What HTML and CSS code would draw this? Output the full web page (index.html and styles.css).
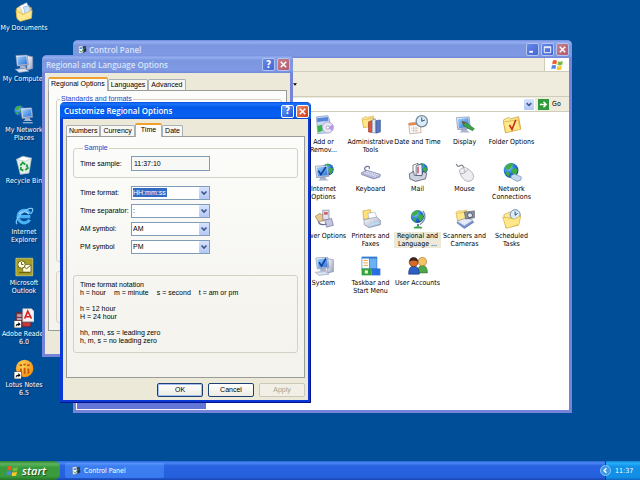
FILE: index.html
```
<!DOCTYPE html>
<html lang="en">

<head>
    <meta charset="UTF-8">
    <meta name="viewport" content="width=device-width, initial-scale=1.0">
    <title>Desktop</title>
    <link rel="stylesheet" href="styles.css">
</head>

<body>
    <!-- shared icon parts -->
    <svg class="defs" width="0" height="0" aria-hidden="true">
        <defs>
            <linearGradient id="gFolder" x1="0" y1="0" x2="1" y2="1">
                <stop offset="0" stop-color="#fff6b8"/>
                <stop offset="1" stop-color="#ecb93c"/>
            </linearGradient>
            <linearGradient id="gScreen" x1="0" y1="0" x2="1" y2="1">
                <stop offset="0" stop-color="#9bd4ff"/>
                <stop offset="1" stop-color="#2a6fd6"/>
            </linearGradient>
            <linearGradient id="gGrey" x1="0" y1="0" x2="1" y2="1">
                <stop offset="0" stop-color="#ffffff"/>
                <stop offset="1" stop-color="#9aa3bd"/>
            </linearGradient>
            <radialGradient id="gGlobe" cx="0.35" cy="0.3" r="0.8">
                <stop offset="0" stop-color="#8fd0ff"/>
                <stop offset="0.5" stop-color="#2478d8"/>
                <stop offset="1" stop-color="#0a3a94"/>
            </radialGradient>
            <radialGradient id="gLotus" cx="0.4" cy="0.35" r="0.7">
                <stop offset="0" stop-color="#ffd860"/>
                <stop offset="1" stop-color="#f08c10"/>
            </radialGradient>
        </defs>
        <symbol id="globe" viewBox="0 0 20 20">
            <circle cx="10" cy="10" r="9.5" fill="url(#gGlobe)"/>
            <path d="M3 5Q7 0 12 1Q13 4 10 5Q10 8 6 9Q3 9 2 7ZM11 9Q15 6 18 8Q19 13 15 17Q12 17 12 13Q10 12 11 9ZM4 12Q8 12 8 15L7 18Q4 16 3 13Z" fill="#3fae3c"/>
        </symbol>
        <symbol id="monitor" viewBox="0 0 24 24">
            <path d="M8 17L17 18L18 21L22 23L6 23L9 21Z" fill="#a9b4d0"/>
            <path d="M2 2L20 1L22 17L4 19Z" fill="url(#gGrey)" stroke="#7d8cb5"/>
            <path d="M4 4L18.500 3L20 15L6 17Z" fill="url(#gScreen)"/>
        </symbol>
        <symbol id="folder" viewBox="0 0 30 28">
            <path d="M2 7L10 3L13 5L25 2L28 20L5 26Z" fill="url(#gFolder)" stroke="#c99a2a"/>
            <path d="M2 10L24 7L28 21L6 26Z" fill="#ffe88a" stroke="#d6a838"/>
        </symbol>
        <symbol id="flag" viewBox="0 0 22 20">
            <path d="M3 3Q6 0 10 3L9 9Q5 7 2 9Z" fill="#ee5a28"/>
            <path d="M12 3.500Q16 6 20 3L19 9Q15 12 11 9.500Z" fill="#77bb3c"/>
            <path d="M1.500 11Q5 9 8.500 11L7.500 17Q4 15 0.500 17Z" fill="#4e86e8"/>
            <path d="M10.500 11.500Q14 14 18.500 11L17.500 17Q13 20 9.500 17.500Z" fill="#fcc72c"/>
        </symbol>
        <symbol id="cpl" viewBox="0 0 16 16">
            <path d="M7 3L14 1L15 10L9 13Z" fill="#2a2f50"/>
            <path d="M2 2L9 1L10 12L3 14Z" fill="#f5f8ff" stroke="#7080a8"/>
            <path d="M4 4L8 3.500V6L4 6.500Z" fill="#3b77d8"/>
            <path d="M4 9L7 11L13 4" fill="none" stroke="#2e9a4a" stroke-width="1.500"/>
        </symbol>
        <symbol id="shortcut" viewBox="0 0 12 12">
            <path d="M0 0H12V12H0Z" fill="#fff" stroke="#000"/>
            <path d="M3 10Q2 5 7 5V2.500L10.500 6L7 9V7Q4 7 3 10Z" fill="#000"/>
        </symbol>
        <symbol id="close" viewBox="0 0 12 12">
            <path d="M3 3L9 9M9 3L3 9" stroke="#fff" stroke-width="1.600"/>
        </symbol>
        <symbol id="chevron" viewBox="0 0 10 12">
            <path d="M2.500 4.500L5 7L7.500 4.500" fill="none" stroke="#3d5588" stroke-width="1.600"/>
        </symbol>
    </svg>

    <main class="desktop">
        <nav class="shortcuts" aria-label="Desktop icons">
            <a class="shortcut" href="#">
                <svg viewBox="0 0 32 32">
                    <path d="M4 10L12 5L28 9L27 26L10 30L4 24Z" fill="url(#gFolder)" stroke="#c99a2a"/>
                    <path d="M9 7L20 1L27 14L16 21Z" fill="#fff" stroke="#b8c4dc"/>
                    <path d="M15 8L24 6L27 17L18 20Z" fill="#cfe4fb" stroke="#7ea6dc"/>
                    <path d="M3 13L14 20L29 13L28 26L10 31L5 27Z" fill="#ffe98f" stroke="#d6a838"/>
                </svg>
                <span>My Documents</span>
            </a>
            <a class="shortcut" href="#">
                <svg viewBox="0 0 32 32">
                    <path d="M20 4L30 6L30 25L21 27Z" fill="url(#gGrey)" stroke="#7d8cb5"/>
                    <use href="#monitor" x="1" y="2" width="24" height="24"/>
                    <path d="M2 26L18 25L24 29L8 31Z" fill="#dfe5f2" stroke="#8b99bb"/>
                </svg>
                <span>My Computer</span>
            </a>
            <a class="shortcut" href="#">
                <svg viewBox="0 0 32 32">
                    <use href="#globe" x="0" y="2" width="18" height="18"/>
                    <use href="#monitor" x="9" y="5" width="23" height="23"/>
                    <path d="M14 30H30" stroke="#9fb6dc" stroke-width="2"/>
                </svg>
                <span>My Network Places</span>
            </a>
            <a class="shortcut" href="#">
                <svg viewBox="0 0 32 32">
                    <path d="M4 7L28 5L24 29L10 31Z" fill="#e3efea" stroke="#a5b9bd"/>
                    <path d="M4 7L14 2L28 5L18 10Z" fill="#fff" stroke="#b6c6ca"/>
                    <path d="M10 17L14 12L18 15M20 15L22 21L18 24M15 25L11 23L11 19" fill="none" stroke="#24a03a" stroke-width="3"/>
                </svg>
                <span>Recycle Bin</span>
            </a>
            <a class="shortcut" href="#">
                <svg viewBox="0 0 32 32">
                    <path d="M25 12A10 10 0 1 0 25 22M7 17H26" fill="none" stroke="#4db2f5" stroke-width="5"/>
                    <path d="M24 13A10 10 0 0 0 8 13" fill="none" stroke="#a4dcff" stroke-width="2"/>
                    <path d="M5 29Q0 25 11 13Q23 2 29 4Q32 7 26 13" fill="none" stroke="#7cc8fa" stroke-width="2"/>
                </svg>
                <span>Internet Explorer</span>
            </a>
            <a class="shortcut" href="#">
                <svg viewBox="0 0 32 32">
                    <path d="M3 2H30V30H3Z" fill="#a8a024" stroke="#e3df8e"/>
                    <path d="M14 12H27V24H14Z" fill="#fffce0" stroke="#5f5a10"/>
                    <path d="M14 13L20 19L27 13M8 25H26" fill="none" stroke="#5f5a10" stroke-width="1.500"/>
                    <circle cx="12" cy="12" r="6" fill="#fffce0" stroke="#5f5a10" stroke-width="1.500"/>
                    <path d="M12 8V12H15" fill="none" stroke="#5f5a10" stroke-width="1.500"/>
                </svg>
                <span>Microsoft Outlook</span>
            </a>
            <a class="shortcut" href="#">
                <svg viewBox="0 0 32 32">
                    <path d="M3 7H27V30H3Z" fill="#7c3a48" stroke="#4d2434"/>
                    <path d="M5 10H12V14H5ZM5 16H12V19H5Z" fill="#b8a8b4"/>
                    <path d="M14 1H28L32 5V22H14Z" fill="#f6f3f3" stroke="#b9a9a9"/>
                    <path d="M17 17L22 5L28 17M19 14H26" fill="none" stroke="#dd2020" stroke-width="2.500"/>
                    <path d="M15 24H26V29H15Z" fill="#d03438"/>
                    <use href="#shortcut" x="0" y="20" width="12" height="12"/>
                </svg>
                <span>Adobe Reader 6.0</span>
            </a>
            <a class="shortcut" href="#">
                <svg viewBox="0 0 32 32">
                    <circle cx="17" cy="15" r="14" fill="url(#gLotus)"/>
                    <path d="M11 15V23M17 14V24M23 15V23" stroke="#c65a08" stroke-width="3"/>
                    <path d="M9 10H13M15 9H19M21 10H25" stroke="#c65a08" stroke-width="3"/>
                    <use href="#shortcut" x="0" y="20" width="12" height="12"/>
                </svg>
                <span>Lotus Notes 6.5</span>
            </a>
        </nav>

        <section class="window control-panel inactive">
            <header class="titlebar">
                <svg class="title-icon"><use href="#cpl"/></svg>
                <h1>Control Panel</h1>
                <button class="cap" aria-label="Minimize"><svg viewBox="0 0 12 12"><path d="M2.500 8.500H6.500" stroke="#fff" stroke-width="2"/></svg></button>
                <button class="cap" aria-label="Maximize"><svg viewBox="0 0 12 12"><path d="M2.500 3H9.500V9.500H2.500ZM2.500 4H9.500" fill="none" stroke="#fff"/></svg></button>
                <button class="cap cap-close" aria-label="Close"><svg><use href="#close"/></svg></button>
            </header>
            <div class="menubar">
                <div class="throbber"><svg><use href="#flag"/></svg></div>
            </div>
            <div class="toolbar">
                <button aria-label="Views"><svg viewBox="0 0 5 3"><path d="M0 0H5L2.500 3Z" fill="#000"/></svg></button>
            </div>
            <div class="address">
                <div class="address-box"><svg><use href="#chevron"/></svg></div>
                <button class="go">
                    <svg viewBox="0 0 12 12">
                        <path d="M0 0H12V12H0Z" fill="#2f9a3c"/>
                        <path d="M2 6H9M6 3L9 6L6 9" fill="none" stroke="#fff" stroke-width="1.500"/>
                    </svg>
                    Go
                </button>
            </div>
            <div class="cp-body">
                <aside class="side-pane"></aside>
                <div class="items">
                    <a class="item" href="#">
                        <svg viewBox="0 0 32 32">
                            <path d="M4 3L22 1L25 8L24 28L6 30Z" fill="#c9dcf6" stroke="#6f8cc4"/>
                            <path d="M5 5L22 3L23 9L5 11Z" fill="#5b86d8"/>
                            <circle cx="22" cy="20" r="9" fill="#e7e3f4" stroke="#8f8bb5"/>
                            <path d="M22 20L30 15A9 9 0 0 1 29 25Z" fill="#b79be0"/>
                            <circle cx="22" cy="20" r="2.500" fill="#fff" stroke="#8f8bb5"/>
                            <path d="M5 18L12 15L14 25L7 28Z" fill="#37b34a"/>
                        </svg>
                        <span>Add or Remov...</span>
                    </a>
                    <a class="item" href="#">
                        <svg viewBox="0 0 32 32">
                            <use href="#folder" x="0" y="0" width="24" height="22"/>
                            <path d="M12 11L17 9V28L12 27Z" fill="#e0563a" stroke="#913020"/>
                            <path d="M18 8L23 6V29L18 28Z" fill="#e8ecf6" stroke="#6c7ba5"/>
                            <path d="M24 9L31 8V27L24 29Z" fill="#5878c0" stroke="#34508c"/>
                        </svg>
                        <span>Administrative Tools</span>
                    </a>
                    <a class="item one-line" href="#">
                        <svg viewBox="0 0 32 32">
                            <path d="M1 13L19 11L21 28L3 30Z" fill="#fff" stroke="#b88a6a"/>
                            <path d="M1 13L19 11V15L2 17Z" fill="#e88a4c"/>
                            <path d="M5 21H17M5 25H17M9 18V28M13 18V28" stroke="#c9b6a8"/>
                            <circle cx="22" cy="10" r="9" fill="#d9ecf8" stroke="#75899c" stroke-width="2"/>
                            <path d="M22 4V10L27 8" fill="none" stroke="#2c4468" stroke-width="1.500"/>
                        </svg>
                        <span>Date and Time</span>
                    </a>
                    <a class="item" href="#">
                        <svg viewBox="0 0 32 32">
                            <use href="#monitor" x="0" y="1" width="27" height="29"/>
                            <path d="M12 12L17 12L31 22L28 25L14 17Z" fill="#3aa644" stroke="#1c6e2c"/>
                            <path d="M10 9L17 11L14 16Z" fill="#7a5230"/>
                        </svg>
                        <span>Display</span>
                    </a>
                    <a class="item one-line" href="#">
                        <svg viewBox="0 0 32 32">
                            <use href="#folder" x="0" y="0" width="32" height="31"/>
                            <path d="M12 16L16 23L22 8" fill="none" stroke="#c22c1c" stroke-width="2.500"/>
                        </svg>
                        <span>Folder Options</span>
                    </a>
                    <a class="item" href="#">
                        <svg viewBox="0 0 32 32">
                            <use href="#globe" x="12" y="2" width="20" height="20"/>
                            <use href="#monitor" x="0" y="4" width="26" height="27"/>
                            <path d="M7 14L11 20L19 8" fill="none" stroke="#0f3f9c" stroke-width="2.500"/>
                        </svg>
                        <span>Internet Options</span>
                    </a>
                    <a class="item" href="#">
                        <svg viewBox="0 0 32 32">
                            <path d="M8 14Q3 10 9 7Q15 6 13 11" fill="none" stroke="#74789a" stroke-width="2"/>
                            <path d="M1 17L9 13L31 20L30 24L20 27L1 20Z" fill="#b4b9da" stroke="#666a90"/>
                            <path d="M5 17L24 23M9 15L28 21" stroke="#f6f7ff" stroke-width="1.500" stroke-dasharray="2 1"/>
                        </svg>
                        <span>Keyboard</span>
                    </a>
                    <a class="item" href="#">
                        <svg viewBox="0 0 32 32">
                            <use href="#globe" x="13" y="1" width="19" height="20"/>
                            <path d="M8 5L16 2L17 22H8Z" fill="#fff" stroke="#30344c"/>
                            <path d="M13 6L22 3L23 22H13Z" fill="#eef3ff" stroke="#30344c"/>
                            <path d="M15 8L17 7V18H15Z" fill="#c83038"/>
                            <path d="M2 19L9 15L10 21L22 22L24 15L30 18L28 27L12 31L3 27Z" fill="#cdd3e2" stroke="#30344c"/>
                        </svg>
                        <span>Mail</span>
                    </a>
                    <a class="item" href="#">
                        <svg viewBox="0 0 32 32">
                            <path d="M14 10Q13 3 8 6Q4 9 2 3" fill="none" stroke="#84868f" stroke-width="2"/>
                            <path d="M7 14Q10 8 17 9Q28 14 30 23Q29 31 20 31Q10 28 7 14Z" fill="#eeeef2" stroke="#8b8d99"/>
                            <path d="M9 19Q15 20 21 12M14 10L16 17" fill="none" stroke="#8b8d99"/>
                        </svg>
                        <span>Mouse</span>
                    </a>
                    <a class="item" href="#">
                        <svg viewBox="0 0 32 32">
                            <use href="#globe" x="2" y="1" width="25" height="25"/>
                            <path d="M14 22L20 19L31 24L30 29L24 31L15 26Z" fill="#c4d8ee" stroke="#6684b0"/>
                        </svg>
                        <span>Network Connections</span>
                    </a>
                    <a class="item one-line" href="#">
                        <svg viewBox="0 0 32 32">
                            <path d="M2 12L9 7L17 11L15 19L7 20Z" fill="#e9c98c" stroke="#8a6c42"/>
                            <path d="M14 2L24 2V17H14Z" fill="#e4e0ee" stroke="#78718e"/>
                            <path d="M16 5H22V9H16Z" fill="#c86060"/>
                            <path d="M17 18L28 15L31 26L20 29Z" fill="#c3c6de" stroke="#666a92"/>
                            <path d="M7 20Q9 27 20 24" fill="none" stroke="#666a92" stroke-width="2"/>
                        </svg>
                        <span>Power Options</span>
                    </a>
                    <a class="item" href="#">
                        <svg viewBox="0 0 32 32">
                            <path d="M3 3L15 1L18 14L4 17Z" fill="#ffe07a" stroke="#c99a2a"/>
                            <path d="M11 7L22 5L26 15L13 17Z" fill="#fff" stroke="#9fabc3"/>
                            <path d="M5 17L25 13L31 18V25L13 30L5 25Z" fill="url(#gGrey)" stroke="#7a86a3"/>
                            <path d="M14 24L28 20L30 23L15 27Z" fill="#b5dcf8"/>
                        </svg>
                        <span>Printers and Faxes</span>
                    </a>
                    <a class="item selected" href="#">
                        <svg viewBox="0 0 32 32">
                            <path d="M24 3Q32 15 19 25" fill="none" stroke="#7689a6" stroke-width="2"/>
                            <use href="#globe" x="4" y="1" width="22" height="22"/>
                            <path d="M16 24V28" stroke="#55709b" stroke-width="3"/>
                            <path d="M9 29Q16 26 23 29L22 31H10Z" fill="#39a64a"/>
                        </svg>
                        <span>Regional and Language ...</span>
                    </a>
                    <a class="item" href="#">
                        <svg viewBox="0 0 32 32">
                            <use href="#folder" x="0" y="0" width="22" height="20"/>
                            <path d="M3 22L18 16L30 21L15 31Z" fill="#7895d8" stroke="#4a62a4"/>
                            <path d="M3 20L18 14L29 18L15 27Z" fill="#e4ebf8" stroke="#8592b3"/>
                            <path d="M15 5L31 3V14L17 16Z" fill="#8c929f" stroke="#4d525e"/>
                            <circle cx="24" cy="10" r="4" fill="#dce8f4" stroke="#4d525e" stroke-width="1.500"/>
                        </svg>
                        <span>Scanners and Cameras</span>
                    </a>
                    <a class="item" href="#">
                        <svg viewBox="0 0 32 32">
                            <path d="M3 9L12 5L29 8L26 26L6 30Z" fill="url(#gFolder)" stroke="#c99a2a"/>
                            <circle cx="21" cy="9" r="8" fill="#d9ecf8" stroke="#6684a8" stroke-width="1.500"/>
                            <path d="M21 4V10L25 7" fill="none" stroke="#2c4468" stroke-width="1.500"/>
                            <path d="M1 13L20 16L30 11L27 25L7 31Z" fill="#ffe88a" stroke="#d6a838"/>
                        </svg>
                        <span>Scheduled Tasks</span>
                    </a>
                    <a class="item" href="#">
                        <svg viewBox="0 0 32 32">
                            <path d="M21 4L31 6V25L22 27Z" fill="url(#gGrey)" stroke="#7d8cb5"/>
                            <use href="#monitor" x="1" y="1" width="25" height="25"/>
                            <path d="M8 10L12 16L19 4" fill="none" stroke="#0f3f9c" stroke-width="2.500"/>
                            <path d="M2 26L18 25L24 29L8 31Z" fill="#dfe5f2" stroke="#8b99bb"/>
                        </svg>
                        <span>System</span>
                    </a>
                    <a class="item" href="#">
                        <svg viewBox="0 0 32 32">
                            <path d="M1 1H26V23H1Z" fill="#2c79d0"/>
                            <path d="M2 4H13V20H2Z" fill="#fff"/>
                            <path d="M14 4H25V20H14Z" fill="#6cb0f0"/>
                            <path d="M4 7H11M4 11H11M4 15H11" stroke="#f09a30" stroke-width="1.500"/>
                            <path d="M1 20H17V31H1Z" fill="#33a23c"/>
                            <path d="M17 20H31V31H17Z" fill="#2a6fe0"/>
                            <path d="M6 23H11V28H6Z" fill="#f3f7c8"/>
                        </svg>
                        <span>Taskbar and Start Menu</span>
                    </a>
                    <a class="item one-line" href="#">
                        <svg viewBox="0 0 32 32">
                            <path d="M16 27Q15 15 23 15Q31 15 31 27Z" fill="#4ea84a" stroke="#2c6c30"/>
                            <circle cx="23" cy="9" r="6.500" fill="#f6c268" stroke="#a87020"/>
                            <path d="M1 29Q1 16 9 16Q18 16 18 29Z" fill="#2d5fc4" stroke="#173878"/>
                            <circle cx="9" cy="10" r="7" fill="#d86a28" stroke="#5c2c18"/>
                            <path d="M2 9Q3 2 9 2Q15 2 16 9Q9 5 2 9Z" fill="#3a241c"/>
                        </svg>
                        <span>User Accounts</span>
                    </a>
                </div>
            </div>
        </section>

        <section class="window regional inactive">
            <header class="titlebar">
                <h2>Regional and Language Options</h2>
                <button class="cap" aria-label="Help">?</button>
                <button class="cap cap-close" aria-label="Close"><svg><use href="#close"/></svg></button>
            </header>
            <div class="dialog-body">
                <div class="tabs" role="tablist">
                    <button role="tab" class="tab active" aria-selected="true">Regional Options</button>
                    <button role="tab" class="tab">Languages</button>
                    <button role="tab" class="tab">Advanced</button>
                </div>
                <div class="tab-page">
                    <fieldset class="group formats">
                        <legend>Standards and formats</legend>
                    </fieldset>
                    <fieldset class="group location"></fieldset>
                </div>
            </div>
        </section>

        <section class="window customize">
            <header class="titlebar">
                <h2>Customize Regional Options</h2>
                <button class="cap" aria-label="Help">?</button>
                <button class="cap cap-close" aria-label="Close"><svg><use href="#close"/></svg></button>
            </header>
            <form class="dialog-body">
                <div class="tabs" role="tablist">
                    <button type="button" role="tab" class="tab">Numbers</button>
                    <button type="button" role="tab" class="tab">Currency</button>
                    <button type="button" role="tab" class="tab active" aria-selected="true">Time</button>
                    <button type="button" role="tab" class="tab">Date</button>
                </div>
                <div class="tab-page">
                    <fieldset class="group sample">
                        <legend>Sample</legend>
                        <div class="field">
                            <label for="sample">Time sample:</label>
                            <input type="text" id="sample" value="11:37:10" readonly>
                        </div>
                    </fieldset>
                    <div class="fields">
                        <div class="field">
                            <label for="format">Time format:</label>
                            <div class="combo highlighted">
                                <select id="format"><option>HH:mm:ss</option></select>
                                <svg><use href="#chevron"/></svg>
                            </div>
                        </div>
                        <div class="field">
                            <label for="separator">Time separator:</label>
                            <div class="combo">
                                <select id="separator"><option>:</option></select>
                                <svg><use href="#chevron"/></svg>
                            </div>
                        </div>
                        <div class="field">
                            <label for="am">AM symbol:</label>
                            <div class="combo">
                                <select id="am"><option>AM</option></select>
                                <svg><use href="#chevron"/></svg>
                            </div>
                        </div>
                        <div class="field">
                            <label for="pm">PM symbol</label>
                            <div class="combo">
                                <select id="pm"><option>PM</option></select>
                                <svg><use href="#chevron"/></svg>
                            </div>
                        </div>
                    </div>
                    <div class="notation">
                        <p>Time format notation</p>
                        <p class="units"><span>h = hour</span><span>m = minute</span><span>s = second</span><span>t = am or pm</span></p>
                        <p class="block">h = 12 hour<br>H = 24 hour</p>
                        <p class="block">hh, mm, ss = leading zero<br>h, m, s = no leading zero</p>
                    </div>
                </div>
                <div class="actions">
                    <button type="button" class="btn default">OK</button>
                    <button type="button" class="btn">Cancel</button>
                    <button type="button" class="btn" disabled>Apply</button>
                </div>
            </form>
        </section>
    </main>

    <footer class="taskbar">
        <button class="start"><svg><use href="#flag"/></svg>start</button>
        <button class="task"><svg><use href="#cpl"/></svg>Control Panel</button>
        <div class="tray">
            <button class="tray-toggle" aria-label="Show hidden icons">
                <svg viewBox="0 0 12 12">
                    <circle cx="6" cy="6" r="5.500" fill="#3c9ae8" stroke="#8cc8f8"/>
                    <path d="M7 3.500L4.500 6L7 8.500" fill="none" stroke="#fff" stroke-width="1.500"/>
                </svg>
            </button>
            <time>11:37</time>
        </div>
    </footer>
</body>

</html>
```
FILE: styles.css
```
* {
    box-sizing: border-box;
}

body {
    margin: 0;
    height: 100vh;
    display: flex;
    flex-direction: column;
    overflow: hidden;
    background-color: #004e98;
    font-family: "DejaVu Sans Condensed", "DejaVu Sans", sans-serif;
    font-size: 7px;
    line-height: 8px;
    color: #000;
}

h1, h2, p, fieldset, legend {
    margin: 0;
    padding: 0;
    font-size: inherit;
    font-weight: normal;
}

button, input, select {
    margin: 0;
    padding: 0;
    border: none;
    background: none;
    font: inherit;
    color: inherit;
}

a {
    color: inherit;
    text-decoration: none;
}

svg {
    display: block;
    flex: none;
}

.defs {
    position: absolute;
}

.desktop {
    position: relative;
    flex: 1;
    min-height: 0;
}

/* desktop icons */
.shortcuts {
    width: 48px;
    padding-top: 2px;
    display: grid;
    grid-auto-rows: 51px;
}

.shortcut, .item {
    display: flex;
    flex-direction: column;
    align-items: center;
    gap: 2px;
    text-align: center;
}

.shortcut {
    color: #fff;
    text-shadow: 1px 1px 1px #002a58;
}

.shortcut svg, .item svg {
    width: 20px;
    height: 20px;
}

/* windows */
.window {
    position: absolute;
    display: flex;
    flex-direction: column;
    padding: 0 3px 3px;
    border-radius: 5px 5px 0 0;
    background-color: #0a38d4;
}

.window.inactive {
    background-color: #7583d8;
}

.titlebar {
    height: 18px;
    margin: 0 -3px;
    padding: 1px 3px 0 4px;
    display: flex;
    align-items: center;
    gap: 2px;
    border-radius: 5px 5px 0 0;
    background: linear-gradient(#0a4be0, #1a76fb 12%, #0458ea 30%, #0560f2 85%, #0448cc);
    color: #fff;
}

.inactive .titlebar {
    background: linear-gradient(#6f8ce0, #95aef0 12%, #7b96e0 30%, #8099e4 85%, #7088d8);
    color: #d8e4f8;
}

.titlebar h1, .titlebar h2 {
    flex: 1;
    font-family: "Open Sans", sans-serif;
    font-size: 8px;
    font-weight: 600;
    line-height: 12px;
}

.title-icon {
    width: 10px;
    height: 10px;
}

.cap {
    width: 13px;
    height: 13px;
    display: flex;
    align-items: center;
    justify-content: center;
    border: 1px solid #fff;
    border-radius: 2px;
    background: linear-gradient(135deg, #6b9cf8, #1f50d4);
    font-size: 10px;
    font-weight: bold;
}

.cap svg {
    width: 11px;
    height: 11px;
}

.cap-close {
    background: linear-gradient(135deg, #f08c6c, #d03c18);
}

.inactive .cap {
    border-color: #b4c4f0;
    background: linear-gradient(135deg, #6688e8, #4466d4);
    color: #fff;
}

.inactive .cap-close {
    background: linear-gradient(135deg, #c8808c, #b4586c);
}

/* control panel */
.control-panel {
    top: 40px;
    left: 73px;
    right: 68px;
    bottom: 48px;
}

.menubar, .toolbar, .address {
    display: flex;
    align-items: center;
    background-color: #efecde;
    border-bottom: 1px solid #cfccba;
}

.menubar {
    height: 14px;
    justify-content: flex-end;
}

.throbber {
    width: 25px;
    height: 13px;
    padding-left: 6px;
    display: flex;
    align-items: center;
    border-left: 1px solid #cfccba;
    background-color: #fff;
}

.throbber svg {
    width: 13px;
    height: 12px;
}

.toolbar {
    height: 25px;
    padding-left: 217px;
}

.toolbar svg {
    width: 4px;
    height: 3px;
}

.address {
    height: 15px;
}

.address-box {
    flex: 1;
    height: 13px;
    padding: 1px;
    display: flex;
    justify-content: flex-end;
    background-color: #fff;
}

.address-box svg, .combo svg {
    width: 10px;
    border-radius: 1px;
    background: linear-gradient(#d6e2fd, #b4c8f6);
}

.go {
    width: 31px;
    margin-left: 3px;
    display: flex;
    align-items: center;
    gap: 3px;
}

.go svg {
    width: 11px;
    height: 11px;
}

.cp-body {
    flex: 1;
    min-height: 0;
    display: flex;
    border: 1px solid #fff;
    border-top: none;
    background-color: #fff;
}

.side-pane {
    width: 129px;
    background: linear-gradient(#7ba2e7, #6375d6);
}

.items {
    flex: 1;
    padding: 3px 0 0 94px;
    display: grid;
    grid-template-columns: repeat(5, 47px);
    grid-auto-rows: 47px;
}

.item {
    gap: 3px;
}

.item span {
    padding: 0 1px;
}

.one-line {
    white-space: nowrap;
}

.item.selected span {
    background-color: #ece9d8;
}

/* dialogs */
.regional {
    top: 55px;
    left: 42px;
    width: 251px;
    height: 302px;
}

.customize {
    top: 102px;
    left: 60px;
    width: 251px;
    box-shadow: inset -1px -1px 0 #00138c;
}

.customize .titlebar {
    height: 17px;
    padding-right: 2px;
}

.dialog-body {
    flex: 1;
    padding: 4px 3px 0;
    display: flex;
    flex-direction: column;
    background-color: #ece9d8;
    font-family: "Liberation Sans", Arial, sans-serif;
}

.tabs {
    display: flex;
    align-items: flex-end;
}

.tab {
    height: 11px;
    padding: 0 2px;
    border: 1px solid #a8b0b8;
    border-bottom: none;
    border-radius: 2px 2px 0 0;
    background-color: #f8f7f2;
}

.tab.active {
    height: 14px;
    margin-bottom: -1px;
    padding-bottom: 2px;
    border-top: 2px solid #f0a030;
    background-color: #fbfbf9;
    z-index: 1;
}

.customize .tab.active {
    padding-left: 5px;
    padding-right: 5px;
}

.tab-page {
    border: 1px solid #9a9c98;
    background: linear-gradient(#fcfcfa, #f3f2ec);
}

.group {
    min-width: 0;
    border: 1px solid #d4d2c4;
    border-radius: 3px;
}

.group legend {
    margin-left: 3px;
    padding: 0 1px;
    color: #1446cc;
}

.regional .tab-page {
    height: 241px;
    padding: 4px 4px 0 7px;
}

.formats {
    height: 167px;
}

.location {
    height: 52px;
    margin-top: 9px;
}

.customize .dialog-body {
    padding-bottom: 3px;
}

.customize .tab-page {
    height: 242px;
    padding: 7px 6px 0;
}

.sample {
    height: 34px;
    padding: 4px 0 0 6px;
}

.field {
    display: flex;
    align-items: center;
}

.field label {
    width: 51px;
    white-space: nowrap;
}

.field input, .combo {
    width: 79px;
    height: 14px;
    border: 1px solid #7f9db9;
    background-color: #fff;
}

.field input {
    height: 15px;
    padding: 0 2px;
    background-color: #f8f8f6;
}

.combo {
    display: flex;
}

.combo select {
    flex: 1;
    min-width: 0;
    padding-left: 1px;
    appearance: none;
}

.combo svg {
    height: 12px;
}

.highlighted select {
    background: linear-gradient(#316ac5, #316ac5) 1px 1px / 34px 9px no-repeat;
    color: #fff;
}

.fields {
    padding: 8px 0 0 7px;
    display: flex;
    flex-direction: column;
    gap: 4px;
}

.notation {
    height: 78px;
    margin-top: 21px;
    padding: 5px 6px;
    border: 1px solid #d4d2c4;
    border-radius: 3px;
}

.units {
    display: flex;
    gap: 8px;
}

.block {
    margin-top: 8px;
}

.actions {
    padding-top: 5px;
    display: flex;
    justify-content: flex-end;
    gap: 5px;
}

.btn {
    width: 46px;
    height: 14px;
    border: 1px solid #1c3f74;
    border-radius: 2px;
    background: linear-gradient(#fff, #ecebe4);
}

.btn.default {
    box-shadow: inset 0 0 0 1px #a0bef0;
}

.btn:disabled {
    border-color: #cac8bb;
    background: #f2f0e6;
    color: #a5a392;
}

/* taskbar */
.taskbar {
    height: 19px;
    display: flex;
    align-items: stretch;
    background: linear-gradient(#2a62dc, #4a8af4 10%, #2a62e0 25%, #2460dc 85%, #1a44b0);
    color: #fff;
}

.start {
    width: 60px;
    padding-left: 6px;
    display: flex;
    align-items: center;
    gap: 3px;
    border-radius: 0 6px 6px 0;
    background: linear-gradient(#2f7f30, #5cb45c 15%, #389a3a 35%, #3a9c3c 80%, #26742a);
    font-family: "Open Sans", sans-serif;
    font-size: 11px;
    font-weight: 600;
    font-style: italic;
    text-shadow: 1px 1px 1px #1c4c1c;
}

.start svg {
    width: 13px;
    height: 12px;
}

.task {
    width: 99px;
    margin: 2px 0 2px 5px;
    padding-left: 6px;
    display: flex;
    align-items: center;
    gap: 3px;
    border-radius: 2px;
    background: linear-gradient(#5c98fc, #3c7ef0 20%, #3a7af0);
}

.task svg {
    width: 10px;
    height: 10px;
}

.tray {
    width: 35px;
    margin-left: auto;
    display: flex;
    align-items: center;
    gap: 4px;
    border-left: 1px solid #0c3c8c;
    background: linear-gradient(#1480d8, #24b0f8 12%, #1290e8 30%, #1290e8 85%, #0c68c0);
}

.tray-toggle {
    margin-left: -6px;
}

.tray-toggle svg {
    width: 11px;
    height: 11px;
}
```
